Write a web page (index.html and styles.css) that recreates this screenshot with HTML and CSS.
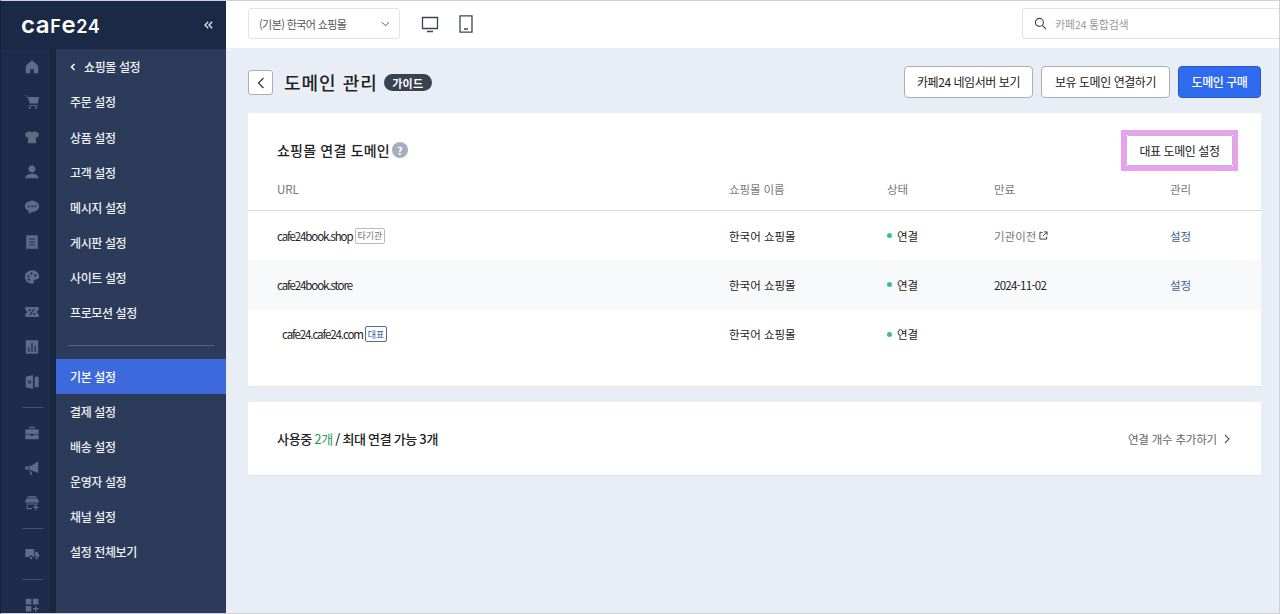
FILE: index.html
```html
<!DOCTYPE html>
<html lang="ko">
<head>
<meta charset="utf-8">
<title>도메인 관리</title>
<link rel="stylesheet" href="styles.css">
</head>
<body>
<div class="app">
  <aside class="sidebar">
    <div class="brand"><span class="logo">ca<span class="logo-small">f</span>e<span class="logo-small">24</span></span><svg class="collapse" viewBox="0 0 9 8"><path d="M4.200 .8 1 4l3.200 3.200M8.200 .8 5 4l3.200 3.200"/></svg></div>
    <div class="side-body">
      <nav class="rail">
        <div class="rail-item"><svg viewBox="0 0 18 18"><path fill-rule="evenodd" d="M9 1.500 2 7.500V16h14V7.500zM7 11.500h4V16H7z"/></svg></div>
        <div class="rail-item"><svg viewBox="0 0 18 18"><path d="M1 1.500 2 .8l2.800 2.500H17l-1.500 7.500H6.500L4 3.500z"/><circle cx="6.500" cy="15.500" r="1.300"/><circle cx="13.500" cy="15.500" r="1.300"/><path d="M5.500 12.300h10v1h-10z"/></svg></div>
        <div class="rail-item"><svg viewBox="0 0 18 18"><path d="M6 2.500 9 4l3-1.500 5 2.500-1 4.500-2.500-.5V16h-9V9L2 9.500 1 5z"/></svg></div>
        <div class="rail-item"><svg viewBox="0 0 18 18"><path fill-rule="evenodd" d="M9 1.500a4 4 0 1 1-.1 0zM1.500 16c0-3 3-5 7.500-5s7.500 2 7.500 5z"/></svg></div>
        <div class="rail-item"><svg viewBox="0 0 18 18"><path fill-rule="evenodd" d="M9 2c4.500 0 8 2.700 8 6.200s-3.500 6.300-8 6.300l-4 2.500.5-3.500C3 12.500 1 10.500 1 8.200 1 4.700 4.500 2 9 2zM5.300 7.300a1 1 0 1 0 .1 0zM9 7.300a1 1 0 1 0 .1 0zM12.700 7.300a1 1 0 1 0 .1 0z"/></svg></div>
        <div class="rail-item"><svg viewBox="0 0 18 18"><path fill-rule="evenodd" d="M2.500 1.500h13v15h-13zM5.500 5v1.200h7V5zM5.500 8.400v1.200h7V8.400zM5.500 11.800V13h7v-1.200z"/></svg></div>
        <div class="rail-item"><svg viewBox="0 0 18 18"><path fill-rule="evenodd" d="M9 1.500c4.500 0 8 3 8 7 0 3-2.500 3.500-4.500 3.500-1.500 0-2 1-1.500 2 .5 1.500 0 2.500-2 2.500-4.500 0-8-3.500-8-7.500S4.500 1.500 9 1.500zM4.800 7a1.200 1.200 0 1 0 .1 0zM8.500 3.800a1.200 1.200 0 1 0 .1 0zM12.800 6a1.200 1.200 0 1 0 .1 0zM5.500 10.800a1.200 1.200 0 1 0 .1 0z"/></svg></div>
        <div class="rail-item"><svg viewBox="0 0 18 18"><path fill-rule="evenodd" d="M1.500 3.500h15V7a2 2 0 0 0 0 4v3.500h-15V11a2 2 0 0 0 0-4zM6 12l1 .8 5-6.800-1-.8zM6.500 5.500a1.200 1.200 0 1 0 .1 0zM11.500 10a1.200 1.200 0 1 0 .1 0z"/></svg></div>
        <div class="rail-item"><svg viewBox="0 0 18 18"><path fill-rule="evenodd" d="M2 1.500h14v15H2zM4.800 9v5.500h1.400V9zM8.300 4.500v10h1.400v-10zM11.800 7.500v7h1.400v-7z"/></svg></div>
        <div class="rail-item"><svg viewBox="0 0 18 18"><path fill-rule="evenodd" d="M2 3l8-2v16l-8-2zM12 3h4.500v12H12zM4 7.700 5.400 9 4 10.300l.8.800L6.200 9.800l1.400 1.300.8-.8L7 9l1.400-1.300-.8-.8L6.200 8.200 4.800 6.900z"/></svg></div>
        <div class="rail-sep"></div>
        <div class="rail-item"><svg viewBox="0 0 18 18"><path fill-rule="evenodd" d="M6 2h6v3h4.500v5h-15V5H6zM7.300 3.300V5h3.400V3.300zM1.500 11h6v1.500h3V11h6v5h-15z"/></svg></div>
        <div class="rail-item"><svg viewBox="0 0 18 18"><path d="M16 1.500v13L8 11.500H6V6.500h2zM1.500 7.500 5 6.500v5l-3.500-1zM6 12.500l2 .5 1.500 3.500-2 .5z"/></svg></div>
        <div class="rail-item"><svg viewBox="0 0 18 18"><path d="M4 1.500h10V3H4zM2.500 4h13L17 8.500H1zM2.500 9.500h13v1.300h-13zM3 11.500h1.300v3.200H9V16H3zM12.500 10.800h1.500v2.400h2.500v1.500H14v2.500h-1.500v-2.500H10v-1.500h2.500z"/></svg></div>
        <div class="rail-sep"></div>
        <div class="rail-item"><svg viewBox="0 0 18 18"><path fill-rule="evenodd" d="M1.500 3.500h10v9H10a2 2 0 0 0-4 0H1.500zM12.500 6.500H15l2 3v3h-1a2 2 0 0 0-3.500 0z"/><circle cx="8" cy="13.500" r="1.400"/><circle cx="14.200" cy="13.500" r="1.400"/></svg></div>
        <div class="rail-sep"></div>
        <div class="rail-item"><svg viewBox="0 0 18 18"><path d="M2 2h6.300v6.300H2zM10 2h6.300v6.300H10zM2 10h6.300v6.300H2zM12.500 10H14v2.500h2.500V14H14v2.500h-1.500V14H10v-1.500h2.500z"/></svg></div>
      </nav>
      <nav class="menu">
        <a class="menu-item menu-back"><svg class="back-chev" viewBox="0 0 6 8"><path d="M4.500 1 1.500 4l3 3"/></svg>쇼핑몰 설정</a>
        <a class="menu-item">주문 설정</a>
        <a class="menu-item">상품 설정</a>
        <a class="menu-item">고객 설정</a>
        <a class="menu-item">메시지 설정</a>
        <a class="menu-item">게시판 설정</a>
        <a class="menu-item">사이트 설정</a>
        <a class="menu-item">프로모션 설정</a>
        <div class="menu-sep"></div>
        <a class="menu-item active">기본 설정</a>
        <a class="menu-item">결제 설정</a>
        <a class="menu-item">배송 설정</a>
        <a class="menu-item">운영자 설정</a>
        <a class="menu-item">채널 설정</a>
        <a class="menu-item">설정 전체보기</a>
      </nav>
    </div>
  </aside>
  <div class="main">
    <header class="topbar">
      <div class="select"><span>(기본) 한국어 쇼핑몰</span><svg class="sel-chev" viewBox="0 0 10 6"><path d="M1 1l4 4 4-4"/></svg></div>
      <svg class="dev-pc" viewBox="0 0 18 18"><path d="M1.500 2.500h15v11h-15zM6 16.500h6"/></svg>
      <svg class="dev-mobile" viewBox="0 0 14 18"><path d="M1 .8h12v16.400H1zM5 14h4"/></svg>
      <div class="search"><svg class="search-ico" viewBox="0 0 14 14"><circle cx="5.800" cy="5.800" r="4.300"/><path d="M9 9l4 4"/></svg><span>카페24 통합검색</span></div>
    </header>
    <main class="content">
      <div class="page-head">
        <button class="back-btn"><svg viewBox="0 0 8 12"><path d="M6.500 1 1.500 6l5 5"/></svg></button>
        <h1 class="page-title">도메인 관리</h1>
        <span class="guide">가이드</span>
        <div class="head-actions">
          <button class="btn">카페24 네임서버 보기</button>
          <button class="btn">보유 도메인 연결하기</button>
          <button class="btn btn-primary">도메인 구매</button>
        </div>
      </div>
      <section class="card card-table">
        <div class="card-head">
          <h2 class="card-title">쇼핑몰 연결 도메인</h2>
          <span class="help">?</span>
          <div class="highlight"><button class="btn btn-inner">대표 도메인 설정</button></div>
        </div>
        <div class="row row-head">
          <div>URL</div><div>쇼핑몰 이름</div><div>상태</div><div>만료</div><div>관리</div>
        </div>
        <div class="row">
          <div class="url">cafe24book.shop<span class="tag">타기관</span></div>
          <div>한국어 쇼핑몰</div>
          <div class="status"><i class="dot"></i>연결</div>
          <div class="muted">기관이전<svg class="ext" viewBox="0 0 10 10"><path d="M4 1.500H1v7.500h7.500V6M5.500 1h3.500v3.500M9 1 4.500 5.500"/></svg></div>
          <div class="link">설정</div>
        </div>
        <div class="row row-alt">
          <div class="url">cafe24book.store</div>
          <div>한국어 쇼핑몰</div>
          <div class="status"><i class="dot"></i>연결</div>
          <div class="date">2024-11-02</div>
          <div class="link">설정</div>
        </div>
        <div class="row">
          <div class="url url-indent">cafe24.cafe24.com<span class="tag tag-blue">대표</span></div>
          <div>한국어 쇼핑몰</div>
          <div class="status"><i class="dot"></i>연결</div>
          <div></div>
          <div></div>
        </div>
      </section>
      <section class="card card-usage">
        <div class="usage">사용중 <em>2개</em> / 최대 연결 가능 3개</div>
        <a class="add">연결 개수 추가하기<svg viewBox="0 0 6 10"><path d="M1 1l4 4-4 4"/></svg></a>
      </section>
    </main>
  </div>
</div>
</body>
</html>
```

FILE: styles.css
```css
* { box-sizing: border-box; }
html, body { margin: 0; height: 100%; overflow: hidden; }
body { font-family: "Noto Sans CJK KR", "Noto Sans", sans-serif; font-size: 12px; color: #222; background: #e9eef6; }
button { font-family: inherit; cursor: pointer; }
.app { display: flex; width: 1280px; height: 614px; overflow: hidden; border: 1px solid #cfd1d4; border-left-color: #16233c; }

.sidebar { width: 225px; flex: none; display: flex; flex-direction: column; background: #1c2c4a; }
.brand { height: 48px; flex: none; display: flex; align-items: center; justify-content: space-between; padding: 0 13px 0 20px; background: #1a2945; }
.logo { font-family: "Inter", sans-serif; font-weight: 600; font-size: 24px; color: #fff; line-height: 1; letter-spacing: .6px; }
.logo-small { font-size: 18px; text-transform: uppercase; }
.collapse { width: 9px; height: 8px; fill: none; stroke: #e4e8f0; stroke-width: 1.300; }
.side-body { flex: 1; display: flex; min-height: 0; }
.rail { width: 55px; flex: none; overflow: hidden; background: linear-gradient(90deg, #1c2c4a 49px, #182742 49px); }
.rail-item { height: 35px; display: flex; align-items: center; justify-content: center; padding-left: 7px; }
.rail-item svg { width: 16px; height: 16px; fill: #5e6c88; }
.rail-sep { height: 16px; display: flex; align-items: center; justify-content: center; padding-left: 7px; }
.rail-sep::before { content: ""; width: 21px; height: 1px; background: #41506c; }

.menu { flex: 1; background: #2c3b5a; overflow: hidden; }
.menu-item { display: flex; align-items: center; height: 35px; padding-left: 14px; color: #eef1f6; font-size: 12px; font-weight: 500; letter-spacing: -.4px; }
.menu-item:nth-child(n+3):nth-child(-n+8) { padding-top: 1px; }
.back-chev { width: 6px; height: 8px; margin-right: 8px; fill: none; stroke: #fff; stroke-width: 1.500; }
.menu-sep { height: 30px; display: flex; align-items: center; padding: 0 12px; }
.menu-sep::before { content: ""; flex: 1; height: 1px; background: #55637d; margin-top: 2px; }
.active { background: #3c69dc; color: #fff; }

.main { flex: 1; min-width: 0; display: flex; flex-direction: column; }
.topbar { height: 47px; flex: none; display: flex; align-items: center; padding: 0 0 2px 22px; background: #fff; }
.select { width: 152px; height: 31px; display: flex; align-items: center; justify-content: space-between; padding: 0 9px 0 10px; border: 1px solid #dfe3ea; border-radius: 3px; color: #555; font-size: 11px; letter-spacing: -.6px; }
.sel-chev { width: 9px; height: 6px; fill: none; stroke: #555; stroke-width: 1.100; }
.dev-pc { width: 18px; height: 18px; margin-left: 21px; fill: none; stroke: #3c4453; stroke-width: 1.300; }
.dev-mobile { width: 14px; height: 18px; margin-left: 20px; fill: none; stroke: #3c4453; stroke-width: 1.300; }
.search { width: 257px; height: 31px; margin-left: auto; display: flex; align-items: center; padding-left: 11px; border: 1px solid #dfe3ea; border-right: 0; border-radius: 3px 0 0 3px; color: #9a9a9a; font-size: 11px; letter-spacing: -.3px; }
.search-ico { width: 13px; height: 13px; margin-right: 8px; fill: none; stroke: #444; stroke-width: 1.200; }

.content { flex: 1; padding: 18px 18px 0 22px; }
.page-head { display: flex; align-items: center; height: 31px; }
.back-btn { width: 25px; height: 25px; padding: 0; margin-top: 2px; display: flex; align-items: center; justify-content: center; background: #fff; border: 1px solid #a9aeb8; border-radius: 3px; }
.back-btn svg { width: 8px; height: 12px; fill: none; stroke: #333; stroke-width: 1.200; }
.page-title { margin: 1px 0 0 11px; font-size: 18px; font-weight: 500; line-height: 25px; letter-spacing: 1px; color: #1f1f1f; }
.guide { margin: 2px 0 0 6px; height: 17px; width: 48px; display: flex; align-items: center; justify-content: center; border-radius: 9px; background: #3a4150; color: #fff; font-size: 11px; font-weight: 700; letter-spacing: .3px; }
.head-actions { margin-left: auto; display: flex; gap: 8px; }
.btn { height: 32px; padding: 0; background: #fff; border: 1px solid #a9aeb8; border-radius: 4px; color: #222; font-size: 12px; letter-spacing: -.45px; }
.head-actions .btn { width: 129px; }
.head-actions .btn-primary { width: 83px; background: #2e6bef; border-color: #2a58c2; color: #fff; font-weight: 500; }

.card { background: #fff; border-bottom: 1px solid #dfe3ea; border-radius: 2px; }
.card-table { height: 274px; margin-top: 16px; padding-top: 17px; }
.card-head { height: 41px; display: flex; align-items: center; padding: 0 23px 0 29px; }
.card-title { margin: 0 0 2px; font-size: 14px; font-weight: 500; letter-spacing: .2px; color: #222; }
.help { width: 16px; height: 16px; margin: 0 0 2px 2px; display: flex; align-items: center; justify-content: center; border-radius: 50%; background: #a7aec0; color: #fff; font-size: 11px; font-weight: 700; }
.highlight { margin-left: auto; border: 5px solid #e9a0ef; background: #fff; width: 117px; height: 41px; display: flex; }
.btn-inner { width: 107px; height: 31px; border-color: #b8bcc6; border-radius: 2px; }

.row { display: grid; grid-template-columns: 452px 158px 107px 176px 1fr; align-items: center; height: 49.300px; padding-left: 29px; color: #222; font-size: 11.500px; }
.row-head { height: 40px; padding-bottom: 4px; border-bottom: 1px solid #d8d8d8; color: #777; letter-spacing: -.1px; }
.row-alt { background: #f8f9fb; }
.url { display: flex; align-items: center; gap: 2px; letter-spacing: -1.1px; }
.url-indent { padding-left: 5px; }
.tag { height: 16px; padding: 0 2px; display: inline-flex; align-items: center; border: 1px solid #bbb; border-radius: 2px; color: #777; font-size: 9px; line-height: 1; letter-spacing: 0; }
.tag-blue { border-color: #4a6ba8; color: #2e5aa8; }
.status { display: flex; align-items: center; }
.dot { width: 5px; height: 5px; margin-right: 5px; border-radius: 50%; background: #3cc08f; }
.muted { color: #777; display: flex; align-items: center; }
.date { letter-spacing: -.7px; }
.ext { width: 9px; height: 9px; margin-left: 3px; fill: none; stroke: #444; stroke-width: 1.100; }
.link { color: #3e5d92; }

.card-usage { height: 74px; margin-top: 15px; display: flex; align-items: center; justify-content: space-between; padding: 0 31px 0 29px; }
.usage { font-size: 13px; font-weight: 500; letter-spacing: -.3px; word-spacing: -1px; color: #222; }
.usage em { font-style: normal; font-weight: 400; color: #1d9a5c; }
.add { display: flex; align-items: center; color: #666; font-size: 11.500px; letter-spacing: -.2px; }
.add svg { width: 6px; height: 10px; margin-left: 7px; fill: none; stroke: #555; stroke-width: 1.100; }
```
